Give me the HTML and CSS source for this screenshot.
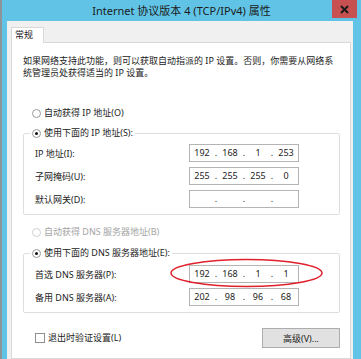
FILE: index.html
```html
<!DOCTYPE html>
<html lang="zh-CN">
<head>
    <meta charset="UTF-8">
    <title>Internet 协议版本 4 (TCP/IPv4) 属性</title>
    <link rel="stylesheet" href="styles.css">
</head>
<body>

<div class="window">
    <div class="titlebar">
        <span></span>
        <span class="title">Internet 协议版本 4 (TCP/IPv4) 属性</span>
        <button class="close" title="关闭">
            <svg width="9" height="9" viewBox="0 0 9 9"><path d="M1 1 L8 8 M8 1 L1 8" stroke="#1a1a1a" stroke-width="2"/></svg>
        </button>
    </div>

    <div class="client">
        <div class="tabs">
            <span class="tab">常规</span>
        </div>

        <div class="panel">
            <p class="intro">如果网络支持此功能，则可以获取自动指派的 IP 设置。否则，你需要从网络系<br>统管理员处获得适当的 IP 设置。</p>

            <label class="option first"><input type="radio" name="ip">自动获得 IP 地址(O)</label>

            <fieldset class="group">
                <legend><label class="option"><input type="radio" name="ip" checked>使用下面的 IP 地址(S):</label></legend>
                <div class="row">
                    <span class="label">IP 地址(I):</span>
                    <div class="ipbox"><span>192</span><i>.</i><span>168</span><i>.</i><span>1</span><i>.</i><span>253</span></div>
                </div>
                <div class="row">
                    <span class="label">子网掩码(U):</span>
                    <div class="ipbox"><span>255</span><i>.</i><span>255</span><i>.</i><span>255</span><i>.</i><span>0</span></div>
                </div>
                <div class="row">
                    <span class="label">默认网关(D):</span>
                    <div class="ipbox"><span></span><i>.</i><span></span><i>.</i><span></span><i>.</i><span></span></div>
                </div>
            </fieldset>

            <label class="option second disabled"><input type="radio" name="dns" disabled>自动获得 DNS 服务器地址(B)</label>

            <fieldset class="group dns">
                <legend><label class="option"><input type="radio" name="dns" checked>使用下面的 DNS 服务器地址(E):</label></legend>
                <div class="row">
                    <span class="label">首选 DNS 服务器(P):</span>
                    <div class="ipbox"><span>192</span><i>.</i><span>168</span><i>.</i><span>1</span><i>.</i><span>1</span></div>
                </div>
                <div class="row">
                    <span class="label">备用 DNS 服务器(A):</span>
                    <div class="ipbox"><span>202</span><i>.</i><span>98</span><i>.</i><span>96</span><i>.</i><span>68</span></div>
                </div>
            </fieldset>

            <div class="actions">
                <label class="check"><input type="checkbox">退出时验证设置(L)</label>
                <button class="btn">高级(V)...</button>
            </div>

            <!-- red mark drawn over the preferred DNS row -->
            <svg class="mark" width="153" height="30" viewBox="0 0 153 30">
                <ellipse cx="76.5" cy="15" rx="75.5" ry="13.5" fill="none" stroke="#e0202a" stroke-width="1.5"/>
            </svg>
        </div>
    </div>
</div>

</body>
</html>
```

FILE: styles.css
```css
body {
    margin: 0;
    background: #8d959b;
    font-family: 'Noto Sans', 'Noto Sans CJK SC', sans-serif;
    font-size: 9px;
    color: #222;
    overflow: hidden;
}
.window {
    margin-left: 2px;
    width: 359px;
    height: 359px;
    background: #61c4e6;
    overflow: hidden;
    display: flex;
    flex-direction: column;
}
.titlebar {
    height: 21px;
    display: grid;
    grid-template-columns: 1fr auto 1fr;
    align-items: start;
}
.title {
    font-size: 11px;
    line-height: 21px;
    color: #1b1b1b;
    white-space: nowrap;
}
.close {
    justify-self: end;
    margin-right: 4px;
    width: 25px;
    height: 18px;
    border: none;
    padding: 0;
    background: #c75050;
    display: flex;
    align-items: center;
    justify-content: center;
}
.client {
    flex: 1;
    margin: 0 8px 0 5px;
    padding: 6px 2px 0 4px;
    background: #f0f0f0;
    display: flex;
    flex-direction: column;
}
.tabs {
    display: flex;
}
.tab {
    position: relative;
    z-index: 1;
    width: 28px;
    height: 15px;
    padding-left: 3px;
    margin-bottom: -1px;
    line-height: 14px;
    background: #fff;
    border: 1px solid #d9d9d9;
    border-bottom: none;
}
.panel {
    position: relative;
    flex: 1;
    background: #fff;
    border: 1px solid #d9d9d9;
    padding: 12px 10px 0 11px;
}
.intro {
    margin: 0;
    line-height: 12px;
    white-space: nowrap;
}
.option {
    display: flex;
    align-items: center;
    height: 12px;
    line-height: 12px;
    white-space: nowrap;
}
.option.first {
    margin-top: 28px;
    padding-left: 9px;
}
.option.second {
    margin-top: 11px;
    padding-left: 9px;
}
.option.disabled {
    color: #a3a3a3;
}
.option input {
    appearance: none;
    -webkit-appearance: none;
    margin: 0 3px 0 0;
    width: 9px;
    height: 9px;
    border: 1px solid #9a9a9a;
    border-radius: 50%;
    background: #fff;
    display: grid;
    place-items: center;
}
.option input:checked::after {
    content: "";
    width: 3px;
    height: 3px;
    border-radius: 50%;
    background: #111;
}
.option input:disabled {
    border-color: #cfcfcf;
}
.group {
    margin: 8px 0 0;
    padding: 5px 10px 6px 11px;
    border: 1px solid #dedede;
    border-radius: 2px;
    min-width: 0;
    display: flex;
    flex-direction: column;
    gap: 5px;
}
.group.dns {
    margin-top: 9px;
    padding-top: 6px;
}
.group legend {
    margin-left: -5px;
    padding: 0 2px;
}
.row {
    display: flex;
    align-items: center;
    height: 18px;
}
.label {
    width: 154px;
}
.ipbox {
    width: 108px;
    height: 16px;
    border: 1px solid #b4b4b4;
    display: flex;
    align-items: center;
    line-height: 16px;
}
.ipbox span {
    width: 24px;
    text-align: center;
}
.ipbox i {
    font-style: normal;
    width: 4px;
    text-align: center;
}
.actions {
    margin-top: 15px;
    padding-left: 12px;
    display: flex;
    justify-content: space-between;
    align-items: center;
}
.check {
    display: flex;
    align-items: center;
    line-height: 12px;
}
.check input {
    appearance: none;
    -webkit-appearance: none;
    margin: 0 3px 0 0;
    width: 10px;
    height: 10px;
    border: 1px solid #8f8f8f;
    background: #fff;
}
.btn {
    width: 78px;
    height: 20px;
    padding: 0;
    font: inherit;
    color: #222;
    background: #e1e1e1;
    border: 1px solid #adadad;
}
.mark {
    position: absolute;
    left: 158px;
    top: 215px;
}
```
